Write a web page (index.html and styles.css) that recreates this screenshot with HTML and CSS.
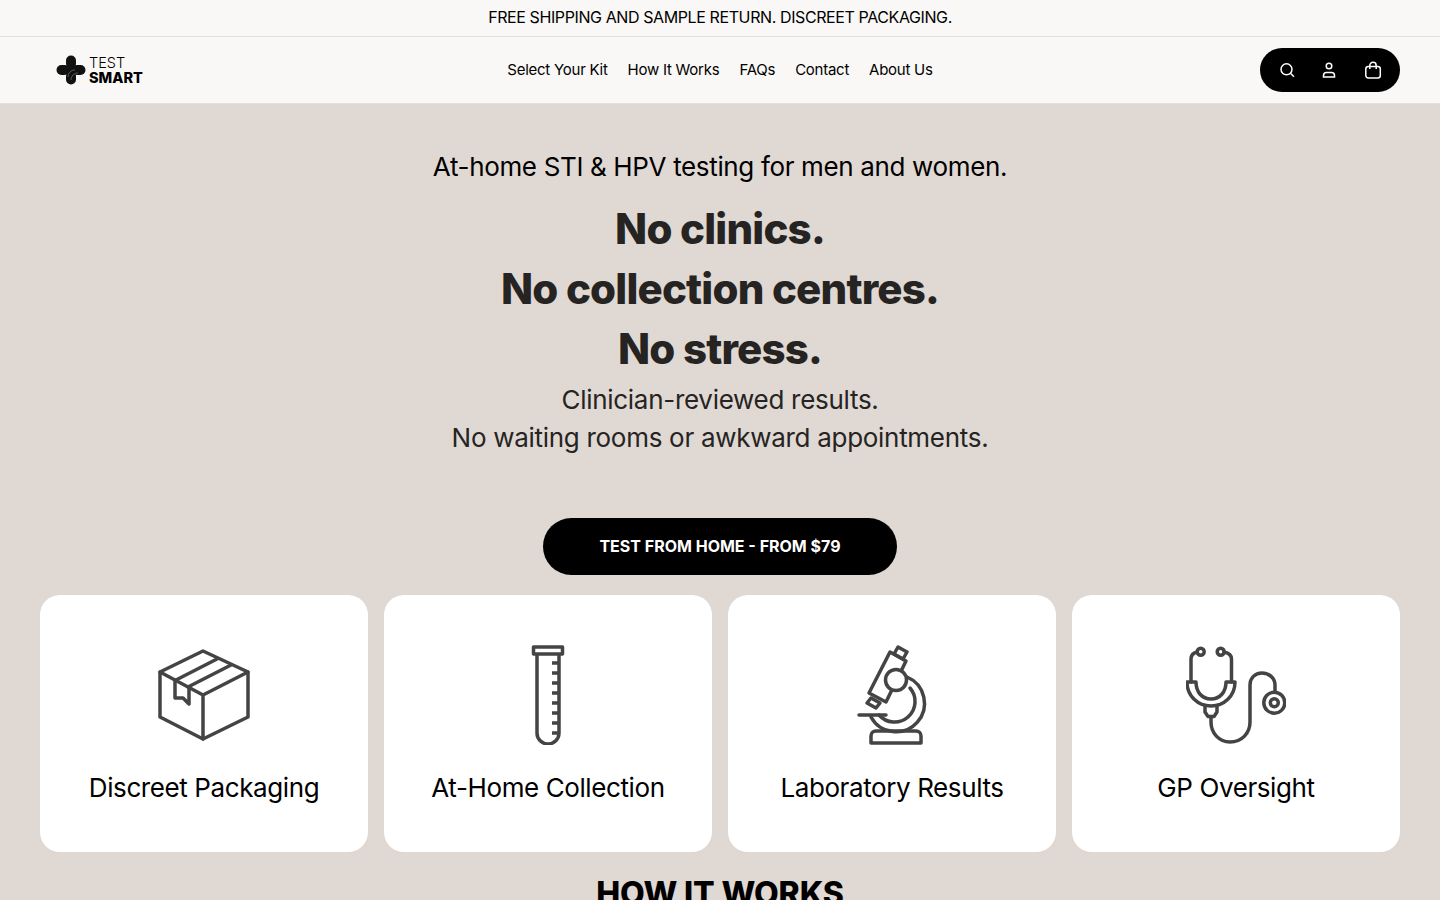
FILE: index.html
```html
<!DOCTYPE html>
<html lang="en">
<head>
    <meta charset="UTF-8">
    <title>Test Smart</title>
    <link rel="stylesheet" href="styles.css">
</head>
<body>
    <div class="announcement">FREE SHIPPING AND SAMPLE RETURN. DISCREET PACKAGING.</div>
    <header class="header">
        <a class="logo" href="#">
            <svg width="30" height="30" viewBox="0 0 30 30"><g fill="#111"><rect x="10" y="0.500" width="10" height="13" rx="5"/><rect x="10" y="16" width="10" height="13.500" rx="5"/><rect x="0.500" y="10" width="13" height="10" rx="5"/><rect x="16" y="10" width="13.500" height="10" rx="5"/><rect x="11" y="11" width="8" height="8"/></g><path d="M12 22C12 18 15 15 19 15M15 25C15 21 18 18 22 18" fill="none" stroke="#888" stroke-width="0.600"/></svg>
            <span class="logo-text"><span>TEST</span><b>SMART</b></span>
        </a>
        <nav class="nav">
            <a href="#">Select Your Kit</a>
            <a href="#">How It Works</a>
            <a href="#">FAQs</a>
            <a href="#">Contact</a>
            <a href="#">About Us</a>
        </nav>
        <div class="header-icons">
            <svg width="18" height="18" viewBox="0 0 18 18" fill="none" stroke="#fff" stroke-width="1.500"><circle cx="8.500" cy="8.300" r="5.500"/><path d="M12.500 12.300l3.500 3.500"/></svg>
            <svg width="18" height="18" viewBox="0 0 18 18" fill="none" stroke="#fff" stroke-width="1.500"><circle cx="8" cy="5" r="2.800"/><path d="M2.500 16v-1.500c0-2 1.500-3 3-3h5c1.500 0 3 1 3 3V16z"/></svg>
            <svg width="18" height="18" viewBox="0 0 18 18" fill="none" stroke="#fff" stroke-width="1.500"><rect x="1.800" y="5.500" width="14.500" height="11.500" rx="2.500"/><path d="M5.800 8V4.500a3.200 3.200 0 0 1 6.400 0V8"/></svg>
        </div>
    </header>

    <main class="hero">
        <p class="hero-top">At-home STI &amp; HPV testing for men and women.</p>
        <h1>No clinics.<br>No collection centres.<br>No stress.</h1>
        <p class="hero-sub">Clinician-reviewed results.<br>No waiting rooms or awkward appointments.</p>
        <a class="cta" href="#">TEST FROM HOME - FROM $79</a>

        <section class="cards">
            <div class="card">
                <svg width="100" height="100" viewBox="0 0 100 100" fill="none" stroke="#444" stroke-width="3.500" stroke-linejoin="round" stroke-linecap="round">
                    <path d="M49 6L94 27V72L49 94L6 72V27Z"/>
                    <path d="M6 27L49 50L94 27M49 50V94"/>
                    <path d="M22 35L63 14M34 42L77 20"/>
                    <path d="M21 35V53H29L35 59V42"/>
                </svg>
                <h3>Discreet Packaging</h3>
            </div>
            <div class="card">
                <svg width="100" height="100" viewBox="0 0 100 100" fill="none" stroke="#444" stroke-width="3.500" stroke-linejoin="round">
                    <path d="M35.500 2H64.500V9H35.500Z"/>
                    <path d="M39 9V88A11 11 0 0 0 61 88V9"/>
                    <path d="M54 18H61M54 28H61M54 38H61M54 48H61M54 58H61M54 68H61M54 78H61M54 88H61"/>
                </svg>
                <h3>At-Home Collection</h3>
            </div>
            <div class="card">
                <svg width="100" height="100" viewBox="0 0 100 100" fill="none" stroke="#444" stroke-width="3.500" stroke-linecap="round" stroke-linejoin="round">
                    <path d="M56 2L65 7L61 14L52 9Z"/>
                    <path d="M48 7L64 16L44 57L27 48Z"/>
                    <path d="M29 53L38 58L34 63L25 58Z"/>
                    <circle cx="54" cy="35" r="10.500" fill="#fff"/>
                    <path d="M65 32A28.500 28.500 0 1 1 29 72"/>
                    <path d="M68 43A20.500 20.500 0 1 1 37 70"/>
                    <path d="M17 70H44"/>
                    <path d="M29 98V91C29 88 31 86 34 86H74C77 86 79 88 79 91V98Z"/>
                </svg>
                <h3>Laboratory Results</h3>
            </div>
            <div class="card">
                <svg width="100" height="100" viewBox="0 0 100 100" fill="none" stroke="#444" stroke-width="3.500" stroke-linecap="round" stroke-linejoin="round">
                    <circle cx="14.700" cy="6.700" r="3.500"/>
                    <circle cx="34.700" cy="6.700" r="3.500"/>
                    <path d="M11 7C7 8 5 10 5 14V37"/>
                    <path d="M38 7C43 8 45.500 10 45.500 14V37"/>
                    <path d="M1 37H10C10 47 16 54 25 54C34 54 40 47 40 37H49C49 51 38 61 25 61C12 61 1 51 1 37Z"/>
                    <path d="M19 61V67L22 71.500H28L31 67V61"/>
                    <path d="M25 71.500V77C25 88 33 97 44 97C56 97 64 88 64 77V40C64 33 69 28 76 28C83 28 89 33 89 40V47"/>
                    <circle cx="88.300" cy="57.700" r="10.500"/>
                    <circle cx="88.300" cy="57.700" r="4"/>
                </svg>
                <h3>GP Oversight</h3>
            </div>
        </section>

        <h2 class="section-title">HOW IT WORKS</h2>
    </main>
</body>
</html>
```

FILE: styles.css
```css
html, body {
    margin: 0;
    height: 900px;
    overflow: hidden;
}
body {
    font-family: Inter, sans-serif;
    color: #000;
    background-color: #e0d8d3;
}
.announcement {
    height: 36px;
    line-height: 35px;
    text-align: center;
    font-size: 16px;
    letter-spacing: -0.4px;
    background-color: #f9f8f6;
    border-bottom: 1px solid #e3e1de;
}
.header {
    display: flex;
    align-items: center;
    justify-content: space-between;
    height: 66px;
    padding: 0 40px;
    background-color: #f9f8f6;
    border-bottom: 1px solid #e4e0dc;
}
.logo {
    display: flex;
    align-items: center;
    gap: 3px;
    width: 140px;
    padding-left: 16px;
    box-sizing: border-box;
    color: #000;
    text-decoration: none;
}
.logo-text {
    display: flex;
    flex-direction: column;
    font-size: 14.500px;
    line-height: 15px;
}
.logo-text span {
    font-weight: 300;
}
.logo-text b {
    font-weight: 800;
}
.nav {
    display: flex;
    gap: 20px;
    margin-top: -2px;
}
.nav a {
    color: #000;
    text-decoration: none;
    font-size: 15px;
    letter-spacing: -0.25px;
}
.header-icons {
    display: flex;
    align-items: center;
    justify-content: space-between;
    box-sizing: border-box;
    width: 140px;
    height: 44px;
    padding: 0 18px;
    background-color: #000;
    border-radius: 22px;
}
.hero {
    display: flex;
    flex-direction: column;
    align-items: center;
    padding: 0 40px;
}
.hero-top {
    margin: 45px 0 0;
    font-size: 26px;
    line-height: 36px;
    letter-spacing: -0.35px;
}
.hero h1 {
    margin: 14px 0 0;
    font-size: 42px;
    line-height: 60px;
    font-weight: 800;
    letter-spacing: -0.8px;
    text-align: center;
    color: #262422;
}
.hero-sub {
    margin: 2px 0 0;
    font-size: 26px;
    line-height: 38px;
    letter-spacing: -0.29px;
    text-align: center;
    color: #262422;
}
.cta {
    margin-top: 61px;
    width: 354px;
    height: 57px;
    line-height: 57px;
    text-align: center;
    background-color: #000;
    color: #fff;
    font-size: 16px;
    font-weight: 700;
    border-radius: 29px;
    text-decoration: none;
}
.cards {
    display: grid;
    grid-template-columns: repeat(4, 1fr);
    gap: 16px;
    width: 100%;
    margin-top: 20px;
}
.card {
    display: flex;
    flex-direction: column;
    align-items: center;
    height: 257px;
    padding-top: 50px;
    box-sizing: border-box;
    background: white;
    border-radius: 20px;
}
.card h3 {
    margin: 25px 0 0;
    font-size: 26px;
    line-height: 36px;
    font-weight: 400;
    letter-spacing: -0.4px;
}
.section-title {
    margin: 22px 0 0;
    font-size: 32px;
    line-height: 40px;
    font-weight: 800;
    letter-spacing: -0.15px;
}
```
